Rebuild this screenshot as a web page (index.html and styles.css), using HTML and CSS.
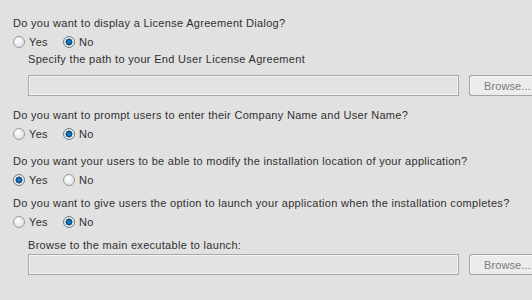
FILE: index.html
```html
<!DOCTYPE html>
<html lang="en">
<head>
  <meta charset="UTF-8" />
  <title>Installer options</title>
  <link rel="stylesheet" href="styles.css">
</head>
<body>
  <div class="page">

    <section class="group">
      <p class="question">Do you want to display a License Agreement Dialog?</p>
      <div class="options">
        <label class="option"><span class="radio"></span>Yes</label>
        <label class="option"><span class="radio checked"></span>No</label>
      </div>
      <div class="sub">
        <p class="hint">Specify the path to your End User License Agreement</p>
        <div class="path-row path-row-first">
          <div class="path-box"></div>
          <button class="browse">Browse...</button>
        </div>
      </div>
    </section>

    <section class="group">
      <p class="question">Do you want to prompt users to enter their Company Name and User Name?</p>
      <div class="options">
        <label class="option"><span class="radio"></span>Yes</label>
        <label class="option"><span class="radio checked"></span>No</label>
      </div>
    </section>

    <section class="group group-tight">
      <p class="question">Do you want your users to be able to modify the installation location of your application?</p>
      <div class="options">
        <label class="option"><span class="radio checked"></span>Yes</label>
        <label class="option"><span class="radio"></span>No</label>
      </div>
    </section>

    <section class="group">
      <p class="question">Do you want to give users the option to launch your application when the installation completes?</p>
      <div class="options">
        <label class="option"><span class="radio"></span>Yes</label>
        <label class="option"><span class="radio checked"></span>No</label>
      </div>
      <div class="sub">
        <p class="hint hint-last">Browse to the main executable to launch:</p>
        <div class="path-row path-row-last">
          <div class="path-box"></div>
          <button class="browse">Browse...</button>
        </div>
      </div>
    </section>

  </div>
</body>
</html>
```

FILE: styles.css
```css
body {
  margin: 0;
  background-color: #e1e1e1;
  font-family: "Liberation Sans", Arial, sans-serif;
  font-size: 11px;
  letter-spacing: 0.3px;
  color: #303030;
  overflow: hidden;
}

.page {
  padding: 15px 0 0 13px;
}

.group {
  margin-bottom: 11px;
}

.group-tight {
  margin-bottom: 7px;
}

.question {
  margin: 0;
  line-height: 16px;
  white-space: nowrap;
}

.options {
  display: flex;
  margin-top: 3px;
  height: 16px;
  align-items: center;
}

.option {
  display: flex;
  align-items: center;
  gap: 4px;
  width: 50px;
}

/* radio buttons drawn by hand */
.radio {
  width: 10px;
  height: 10px;
  border-radius: 50%;
  border: 1px solid #9a9a9a;
  background: radial-gradient(circle at 40% 35%, #ffffff, #e4e4e4 70%, #cfcfcf);
  box-sizing: content-box;
}

.radio.checked {
  border-color: #6b7c8a;
  background: radial-gradient(circle at 50% 50%, #1f8fe0 0, #0a5a9c 2.5px, #2a3a4a 3.2px, #eef2f5 3.8px, #d9dde0 100%);
}

.sub {
  padding-left: 15px;
}

.hint {
  margin: 1px 0 0;
  line-height: 16px;
}

.hint-last {
  margin-top: 7px;
}

.path-row {
  display: flex;
  gap: 10px;
}

.path-row-first {
  margin-top: 8px;
}

.path-row-last {
  margin-top: 1px;
}

.path-box {
  flex: none;
  width: 431px;
  height: 21px;
  box-sizing: border-box;
  border: 1px solid #a9a9a9;
  box-shadow: inset 0 0 0 1px #f3f3f3;
  background-color: #e3e3e3;
}

.browse {
  flex: none;
  width: 63px;
  height: 21px;
  padding: 0 0 0 14px;
  text-align: left;
  white-space: nowrap;
  font-family: inherit;
  font-size: 11px;
  letter-spacing: 0.1px;
  color: #7a7a7a;
  background-color: #ececec;
  border: 1px solid #a3a3a3;
  border-right: none;
  border-radius: 3px 0 0 3px;
  box-shadow: inset 1px 1px 0 #f7f7f7;
}
```
